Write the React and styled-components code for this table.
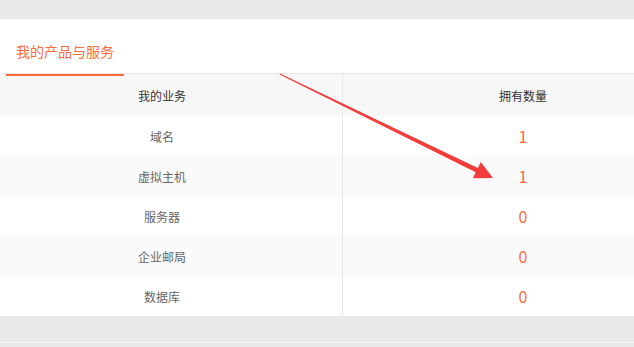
import React from 'react'
import styled, { createGlobalStyle } from "styled-components";

const GlobalStyle = createGlobalStyle`
    html, body {
        margin: 0;
        padding: 0;
        background: #e9e9e9;
        overflow: hidden;
        font-family: "Microsoft YaHei", "Noto Sans CJK SC", sans-serif;
    }
`

const products = [
    { name: "域名", count: 1 },
    { name: "虚拟主机", count: 1 },
    { name: "服务器", count: 0 },
    { name: "企业邮局", count: 0 },
    { name: "数据库", count: 0 },
]

const Arrow = () => (
    <ArrowLayer width="634" height="347" viewBox="0 0 634 347">
        <polygon
            fill="#f33c3c"
            points="280,73.5 477.9,167.9 480.8,162 493,178 472.9,178.2 475.7,172.3 279.6,74.4"
        />
    </ArrowLayer>
)

const App = () => {
    return (
        <>
            <GlobalStyle />
            <Page>
                <Panel>
                    <TabBar>
                        <Tab $active>我的产品与服务</Tab>
                    </TabBar>
                    <Table>
                        <HeadCell>我的业务</HeadCell>
                        <HeadCell $right>拥有数量</HeadCell>
                        {products.map((p, index) => (
                            <React.Fragment key={p.name}>
                                <Cell $striped={index % 2 === 1}>{p.name}</Cell>
                                <CountCell $right $striped={index % 2 === 1}>{p.count}</CountCell>
                            </React.Fragment>
                        ))}
                    </Table>
                </Panel>
                <Footer />
                <Arrow />
            </Page>
        </>
    )
}

const Page = styled.div`
    position: relative;
    width: 634px;
    height: 347px;
    padding-top: 19px;
    box-sizing: border-box;
`

const Panel = styled.div`
    background: #fff;
`

const TabBar = styled.div`
    display: flex;
    height: 54px;
    padding-left: 6px;
    border-bottom: 1px solid #e6e6e6;
`

const Tab = styled.div`
    position: relative;
    display: flex;
    align-items: center;
    padding: 10px 10px 0;
    font-size: 14px;
    color: ${p => (p.$active ? "#ff6a3a" : "#333")};
    &::after {
        content: "";
        position: absolute;
        left: 0;
        right: 0;
        bottom: -3px;
        height: 2px;
        background: ${p => (p.$active ? "#ff6a3a" : "transparent")};
    }
`

const Table = styled.div`
    display: grid;
    grid-template-columns: 342px 1fr;
`

const BaseCell = styled.div`
    display: flex;
    align-items: center;
    justify-content: center;
    box-sizing: border-box;
    padding: ${p => (p.$right ? "0 0 0 69px" : "0 18px 0 0")};
    border-left: ${p => (p.$right ? "1px solid #e8e8e8" : "none")};
`

const HeadCell = styled(BaseCell)`
    height: 42px;
    background: #f7f7f7;
    font-size: 12px;
    color: #333;
`

const Cell = styled(BaseCell)`
    height: 40px;
    background: ${p => (p.$striped ? "#fafafa" : "#fff")};
    font-size: 12px;
    color: #666;
`

const CountCell = styled(Cell)`
    font-size: 16px;
    color: #ff6a3a;
`

const Footer = styled.div`
    height: 26px;
    border-bottom: 1px solid #f6f6f6;
`

const ArrowLayer = styled.svg`
    position: absolute;
    top: 0;
    left: 0;
    pointer-events: none;
`

export default App
